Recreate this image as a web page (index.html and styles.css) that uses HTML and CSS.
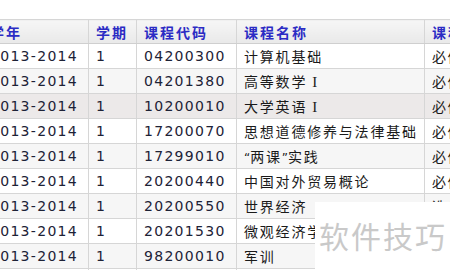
FILE: index.html
```html
<!DOCTYPE html>
<html lang="zh">
<head>
<meta charset="utf-8">
<link rel="stylesheet" href="styles.css">
</head>
<body>
<div class="page">
  <table class="grades">
    <colgroup>
      <col class="c-year"><col class="c-term"><col class="c-code"><col class="c-name"><col class="c-type">
    </colgroup>
    <thead>
      <tr><th>学年</th><th>学期</th><th>课程代码</th><th>课程名称</th><th>课程性质</th></tr>
    </thead>
    <tbody>
      <tr><td class="num">2013-2014</td><td class="num">1</td><td class="num">04200300</td><td class="cjk">计算机基础</td><td class="cjk">必修</td></tr>
      <tr class="alt"><td class="num">2013-2014</td><td class="num">1</td><td class="num">04201380</td><td class="cjk">高等数学 <span class="roman">I</span></td><td class="cjk">必修</td></tr>
      <tr class="sel"><td class="num">2013-2014</td><td class="num">1</td><td class="num">10200010</td><td class="cjk">大学英语 <span class="roman">I</span></td><td class="cjk">必修</td></tr>
      <tr><td class="num">2013-2014</td><td class="num">1</td><td class="num">17200070</td><td class="cjk">思想道德修养与法律基础</td><td class="cjk">必修</td></tr>
      <tr class="alt"><td class="num">2013-2014</td><td class="num">1</td><td class="num">17299010</td><td class="cjk"><span class="quote">“</span>两课<span class="quote">”</span>实践</td><td class="cjk">必修</td></tr>
      <tr><td class="num">2013-2014</td><td class="num">1</td><td class="num">20200440</td><td class="cjk">中国对外贸易概论</td><td class="cjk">必修</td></tr>
      <tr class="alt"><td class="num">2013-2014</td><td class="num">1</td><td class="num">20200550</td><td class="cjk">世界经济</td><td class="cjk">选修</td></tr>
      <tr><td class="num">2013-2014</td><td class="num">1</td><td class="num">20201530</td><td class="cjk">微观经济学</td><td class="cjk">必修</td></tr>
      <tr class="alt"><td class="num">2013-2014</td><td class="num">1</td><td class="num">98200010</td><td class="cjk">军训</td><td class="cjk">必修</td></tr>
      <tr><td class="num">2013-2014</td><td class="num">1</td><td class="num">98200020</td><td class="cjk">入学教育</td><td class="cjk">必修</td></tr>
    </tbody>
  </table>
  <div class="watermark">软件技巧</div>
</div>
</body>
</html>
```

FILE: styles.css
```css
html, body {
  margin: 0;
  padding: 0;
  background: #ffffff;
  overflow: hidden;
}
.page {
  position: relative;
  width: 450px;
  height: 270px;
  overflow: hidden;
  padding-top: 19px;
  box-sizing: border-box;
}
.grades {
  border-collapse: collapse;
  table-layout: fixed;
  width: 560px;
  margin-left: -18px;
}
.c-year { width: 106px; }
.c-term { width: 48px; }
.c-code { width: 100px; }
.c-name { width: 188px; }
.c-type { width: 118px; }
.grades th, .grades td {
  border: 1px solid #d6d6d6;
  padding: 0 0 0 7px;
  text-align: left;
  white-space: nowrap;
  overflow: hidden;
  vertical-align: middle;
}
.grades th {
  height: 23px;
  background: linear-gradient(#f6f6f6, #e9e9e9);
  color: #2b2bc4;
  font-family: "Noto Sans CJK SC", sans-serif;
  font-weight: bold;
  font-size: 14px;
  letter-spacing: 2px;
  border-bottom-color: #cfcfcf;
}
.grades td {
  height: 24px;
  color: #1e1e2a;
}
.grades td.num {
  font-family: "DejaVu Sans", Verdana, sans-serif;
  font-size: 14px;
  letter-spacing: 1.3px;
  color: #1d2236;
}
.grades td.cjk {
  font-family: "Noto Sans CJK SC", sans-serif;
  font-size: 14px;
  letter-spacing: 1.8px;
  color: #1a1a1a;
}
.grades td .roman {
  font-family: "Liberation Serif", serif;
  font-size: 15px;
  letter-spacing: 0;
}
.grades td .quote {
  font-family: "DejaVu Sans", sans-serif;
  font-size: 12px;
  letter-spacing: 0;
}
.grades tr.alt td { background: #f6f6f6; }
.grades tr.sel td { background: #ece9e9; }
.watermark {
  position: absolute;
  left: 315px;
  top: 202px;
  right: 0;
  bottom: 0;
  background: #ffffff;
  color: #c9c9c9;
  font-family: "Noto Sans CJK SC", sans-serif;
  font-size: 30px;
  letter-spacing: 2px;
  padding: 11px 0 0 4px;
  box-sizing: border-box;
  white-space: nowrap;
}
```
